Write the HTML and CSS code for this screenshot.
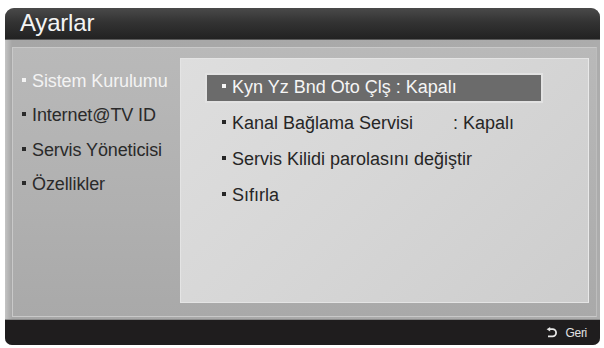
FILE: index.html
```html
<!DOCTYPE html>
<html lang="tr">
<head>
<meta charset="utf-8">
<title>Ayarlar</title>
<link rel="stylesheet" href="styles.css">
</head>
<body>
<div class="window">
  <div class="titlebar">Ayarlar</div>
  <div class="body">
    <div class="inner">
      <ul class="menu">
        <li class="menu-item active">Sistem Kurulumu</li>
        <li class="menu-item">Internet@TV ID</li>
        <li class="menu-item">Servis Yöneticisi</li>
        <li class="menu-item">Özellikler</li>
      </ul>
      <div class="panel">
        <ul class="options">
          <li class="option selected">Kyn Yz Bnd Oto Çlş : Kapalı</li>
          <li class="option"><span class="label">Kanal Bağlama Servisi</span>: Kapalı</li>
          <li class="option">Servis Kilidi parolasını değiştir</li>
          <li class="option">Sıfırla</li>
        </ul>
      </div>
    </div>
  </div>
  <div class="footer">
    <svg class="back-icon" width="12" height="11" viewBox="0 0 12 11" aria-hidden="true">
      <path d="M3.5 2.2 H6.5 A3.6 3.6 0 0 1 6.5 9.4 H2" fill="none" stroke="#e8e8e8" stroke-width="1.8"/>
      <path d="M0.6 2.2 L4.2 0 L4.2 4.4 Z" fill="#e8e8e8"/>
    </svg>
    <span class="back-text">Geri</span>
  </div>
</div>
</body>
</html>
```

FILE: styles.css
```css
html, body {
  margin: 0;
  padding: 0;
  background: #ffffff;
}

body {
  font-family: "Liberation Sans", Arial, sans-serif;
}

.window {
  margin: 8px 0 0 5px;
  width: 595px;
  height: 337px;
  display: flex;
  flex-direction: column;
  border-radius: 9px 9px 7px 7px;
  overflow: hidden;
  background: #a9a9a9;
}

.titlebar {
  height: 31px;
  border-bottom: 1px solid #5a5a5a;
  background: linear-gradient(to bottom, #4a4a4a 0%, #333333 45%, #222222 100%);
  color: #f4f4f4;
  font-size: 24px;
  line-height: 30px;
  padding-left: 15px;
  letter-spacing: -0.2px;
}

.body {
  height: 279px;
  box-sizing: border-box;
  padding: 7px 3px 2px 7px;
  background: linear-gradient(to right, #c4c4c4 0px, #b6b6b6 3px, #a6a6a6 7px, #acacac 100%);
}

.inner {
  height: 270px;
  box-sizing: border-box;
  display: flex;
  border: 1px solid #c9c9c9;
  border-right-color: #bdbdbd;
  background: linear-gradient(to bottom, #b9b9b9 0%, #b0b0b0 60%, #a9a9a9 100%);
}

.menu {
  list-style: none;
  margin: 0;
  padding: 16px 0 0 9px;
  width: 158px;
  flex: none;
}

.menu-item {
  font-size: 18px;
  line-height: 34.3px;
  color: #2a2a2a;
  white-space: nowrap;
  letter-spacing: -0.1px;
}

.menu-item::before,
.option::before {
  content: "";
  display: inline-block;
  width: 4px;
  height: 4px;
  background: currentColor;
  vertical-align: 5px;
  margin-right: 6px;
}

.menu-item.active {
  color: #f3f3f3;
}

.panel {
  margin: 10px 7px 13px 0;
  flex: 1;
  box-sizing: border-box;
  border: 1px solid #e4e4e4;
  border-right-color: #e9e9e9;
  background: linear-gradient(135deg, #dedede 0%, #d6d6d6 50%, #cdcdcd 100%);
  padding: 14px 0 0 24px;
}

.options {
  list-style: none;
  margin: 0;
  padding: 0;
  display: flex;
  flex-direction: column;
  gap: 6px;
}

.option {
  width: 338px;
  height: 30px;
  box-sizing: border-box;
  border: 2px solid transparent;
  padding: 0 0 2px 15px;
  font-size: 18px;
  line-height: 24px;
  color: #262626;
  white-space: nowrap;
}

.option.selected {
  background: #6b6b6b;
  border-color: #e2e2e2;
  color: #f5f5f5;
}

.label {
  display: inline-block;
  width: 221px;
}

.footer {
  height: 26px;
  background: #1f1d1e;
  border-top: 1px solid #8a8a8a;
  box-sizing: border-box;
  display: flex;
  align-items: center;
  justify-content: flex-end;
  padding-right: 13px;
  gap: 8px;
}

.back-icon {
  display: block;
}

.back-text {
  color: #e2e2e2;
  font-size: 12px;
  letter-spacing: -0.3px;
  line-height: 12px;
}
```
